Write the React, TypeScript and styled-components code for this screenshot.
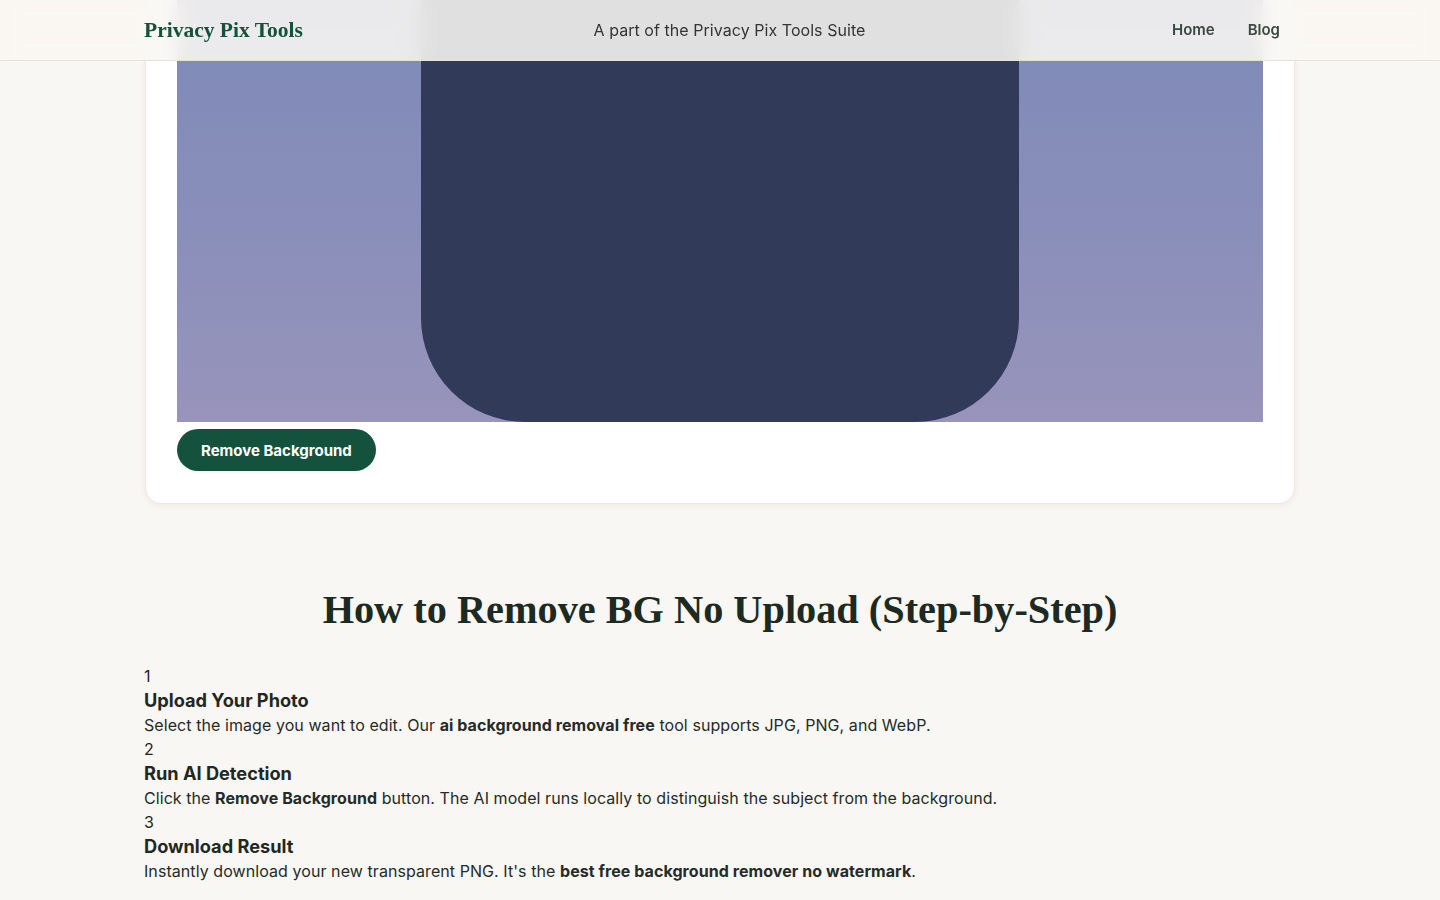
import { FC } from "react";
import styled, { createGlobalStyle } from "styled-components";

const SANS = `Inter, "Noto Sans", "Liberation Sans", sans-serif`;
const SERIF = `"Liberation Serif", "DejaVu Serif", serif`;

const GlobalStyle = createGlobalStyle`
  * { box-sizing: border-box; }
  html, body {
    margin: 0;
    padding: 0;
    background: #f9f7f3;
    font-family: ${SANS};
    color: #1f2823;
    overflow: hidden;
  }
`;

const Header = styled.header`
  position: fixed;
  top: 0;
  left: 0;
  right: 0;
  height: 61px;
  z-index: 10;
  background: rgba(249, 247, 243, 0.88);
  backdrop-filter: blur(10px);
  border-bottom: 1px solid #e6e2da;
`;

const HeaderInner = styled.div`
  max-width: 1152px;
  height: 100%;
  margin: 0 auto;
  padding-bottom: 1px;
  display: flex;
  align-items: center;
  justify-content: space-between;
`;

const Logo = styled.a`
  font-family: ${SERIF};
  font-weight: 700;
  font-size: 21.5px;
  color: #14523a;
  text-decoration: none;
  width: 160px;
  padding-top: 2px;
`;

const Tagline = styled.span`
  font-size: 16px;
  color: #333533;
  letter-spacing: 0.05px;
`;

const Nav = styled.nav`
  display: flex;
  align-items: center;
`;

const NavLink = styled.a`
  padding: 8px 16px 8px 17px;
  font-size: 15px;
  font-weight: 600;
  color: #3b4741;
  text-decoration: none;
`;

const Main = styled.main`
  max-width: 1152px;
  margin: -70px auto 0;
`;

const Card = styled.section`
  background: #fff;
  border-radius: 16px;
  border: 1px solid #ece8e0;
  box-shadow: 0 2px 6px rgba(60, 50, 30, 0.06);
  padding: 31px 31px 32px;
  margin: 0 1px;
`;

const Preview = styled.div`
  height: 460px;
  background: linear-gradient(180deg, #7c89b7 0%, #8a8fba 60%, #9894bb 100%);
  display: flex;
  justify-content: center;
`;

const Subject = styled.div`
  width: 598px;
  height: 100%;
  background: #323a5a;
  border-radius: 0 0 104px 104px;
`;

const PrimaryButton = styled.button`
  margin-top: 7px;
  height: 42px;
  padding: 0 24px;
  border: none;
  border-radius: 21px;
  background: #14523d;
  color: #fff;
  font-family: ${SANS};
  font-size: 15px;
  font-weight: 700;
  cursor: pointer;
`;

const HowTo = styled.section`
  padding-top: 82px;
`;

const Heading = styled.h2`
  margin: 0 0 30px;
  text-align: center;
  font-family: ${SERIF};
  font-weight: 700;
  font-size: 40.3px;
  line-height: 48px;
  color: #1c2a22;
`;

const Steps = styled.ol`
  list-style: none;
  margin: 0;
  padding: 0;
`;

const Step = styled.li`
  display: flex;
  flex-direction: column;
`;

const StepNumber = styled.span`
  font-size: 16px;
  line-height: 24px;
  color: #1f2522;
`;

const StepTitle = styled.h3`
  margin: 0;
  font-size: 18.2px;
  font-weight: 700;
  line-height: 25px;
  color: #1f2823;
`;

const StepText = styled.p`
  margin: 0;
  font-size: 16px;
  line-height: 24px;
  letter-spacing: 0.07px;
  color: #252b28;

  strong {
    font-weight: 700;
  }
`;

interface IStep {
  title: string;
  text: React.ReactNode;
}

const steps: IStep[] = [
  {
    title: "Upload Your Photo",
    text: (
      <>
        Select the image you want to edit. Our{" "}
        <strong>ai background removal free</strong> tool supports JPG, PNG, and
        WebP.
      </>
    ),
  },
  {
    title: "Run AI Detection",
    text: (
      <>
        Click the <strong>Remove Background</strong> button. The AI model runs
        locally to distinguish the subject from the background.
      </>
    ),
  },
  {
    title: "Download Result",
    text: (
      <>
        Instantly download your new transparent PNG. It's the{" "}
        <strong>best free background remover no watermark</strong>.
      </>
    ),
  },
];

const App: FC = () => {
  return (
    <>
      <GlobalStyle />
      <Header>
        <HeaderInner>
          <Logo href="#">Privacy Pix Tools</Logo>
          <Tagline>A part of the Privacy Pix Tools Suite</Tagline>
          <Nav>
            <NavLink href="#">Home</NavLink>
            <NavLink href="#">Blog</NavLink>
          </Nav>
        </HeaderInner>
      </Header>
      <Main>
        <Card>
          <Preview>
            <Subject />
          </Preview>
          <PrimaryButton>Remove Background</PrimaryButton>
        </Card>
        <HowTo>
          <Heading>How to Remove BG No Upload (Step-by-Step)</Heading>
          <Steps>
            {steps.map((step, i) => (
              <Step key={step.title}>
                <StepNumber>{i + 1}</StepNumber>
                <StepTitle>{step.title}</StepTitle>
                <StepText>{step.text}</StepText>
              </Step>
            ))}
          </Steps>
        </HowTo>
      </Main>
    </>
  );
};

export default App;
